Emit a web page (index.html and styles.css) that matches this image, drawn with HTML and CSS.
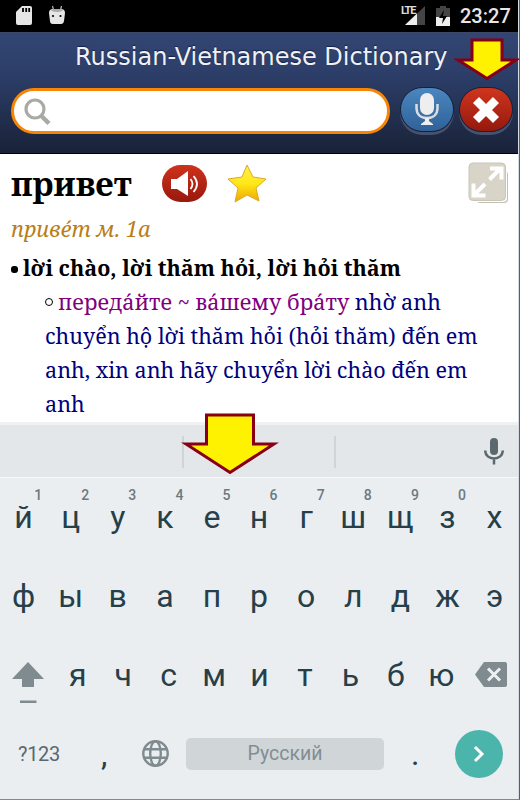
FILE: index.html
```
<!DOCTYPE html>
<html lang="ru">
<head>
  <meta charset="UTF-8" />
  <meta name="viewport" content="width=device-width, initial-scale=1.0"/>
  <title>Russian-Vietnamese Dictionary</title>
  <link rel="stylesheet" href="styles.css">
</head>
<body>
  <div class="screen">
    <div class="status">
      <svg class="sd" width="16" height="20" viewBox="0 0 16 20"><path d="M6 0h8q2 0 2 2v15q0 2-2 2H2q-2 0-2-2V6z" fill="#e6e6e6"/><path d="M7 2v4M10.200 2v4M13.200 2v4" stroke="#000" stroke-width="1.800"/></svg>
      <svg class="droid" width="16" height="20" viewBox="0 0 16 20"><path d="M3.500 1l1 4M12.500 1l-1 4" stroke="#bbb" stroke-width="1.200"/><path d="M0 8q0-4 4-4h8q4 0 4 4l-1 8q-.5 3-3 3H4q-3 0-3-3z" fill="#e6e6e6"/><path d="M2 5.500q6 3 12 0l-2-1.500H4z" fill="#aaa"/><circle cx="4" cy="11" r="1.100"/><circle cx="11.500" cy="11" r="1.100"/></svg>
      <div class="signal">
        <span class="lte">LTE</span>
        <svg width="20" height="19" viewBox="0 0 20 19"><path d="M20 0v19H0z" fill="#444"/><path d="M12 7.600V19H0z" fill="#eee"/></svg>
      </div>
      <svg class="battery" width="14" height="20" viewBox="0 0 14 20"><path d="M4 0h6v2h4v9H0V2h4z" fill="#444"/><path d="M0 11h14v9H0z" fill="#eee"/><path d="M8 4l-5 8h4l-1 6 5-8H7z" fill="#000"/></svg>
      <span class="time">23:27</span>
    </div>

    <div class="header">
      <h1>Russian-Vietnamese Dictionary</h1>
      <div class="search-row">
        <div class="search">
          <svg width="27" height="28" viewBox="0 0 27 28"><circle cx="11" cy="11" r="9" fill="none" stroke="#aaa9a3" stroke-width="3.200"/><path d="M17.500 18l7.500 7.500" stroke="#aaa9a3" stroke-width="4.500"/></svg>
        </div>
        <div class="round blue">
          <svg width="24" height="33" viewBox="0 0 24 33"><rect x="5" y="0" width="14" height="22" rx="7" fill="#eee"/><path d="M1.500 11v4c0 6 4 10 10.500 10s10.500-4 10.500-10v-4" fill="none" stroke="#ddd" stroke-width="2.500"/><path d="M10 25h4v3l4 3v1H6v-1l4-3z" fill="#eee"/></svg>
        </div>
        <div class="round red">
          <svg width="28" height="28" viewBox="0 0 28 28"><path d="M4 4l20 20M24 4L4 24" stroke="#fff" stroke-width="8.500"/></svg>
        </div>
      </div>
      <svg class="arrow-top" width="66" height="44" viewBox="0 0 66 44"><path d="M18 2h30v20h14L33 40.500 4 22h14z" fill="#fff200" stroke="#880015" stroke-width="3" stroke-miterlimit="10"/></svg>
    </div>

    <div class="article">
      <div class="word-row">
        <h2>привет</h2>
        <div class="speak">
          <svg width="28" height="26" viewBox="0 0 28 26"><path d="M0 8h6l11-8v25L6 18H0z" fill="#fff"/><path d="M19.500 8q4 5 0 10M22.500 5q7 8 0 16" fill="none" stroke="#fff" stroke-width="1.800"/></svg>
        </div>
        <svg class="star" width="40" height="40" viewBox="0 0 40 40">
          <defs><linearGradient id="gold" x1="0" y1="0" x2="0" y2="1"><stop offset="0" stop-color="#fff04a"/><stop offset=".5" stop-color="#ffe818"/><stop offset="1" stop-color="#efa500"/></linearGradient></defs>
          <path d="M20 1l6 12 13 2-10 9 3 13-12-6-12 7 3-14L1 15l14-2z" fill="url(#gold)" stroke="#dda82a" stroke-linejoin="round"/>
        </svg>
        <svg class="expand" width="41" height="42" viewBox="0 0 41 42"><rect x="8" y="9" width="32" height="32" rx="4" fill="#c2bfb4"/><rect x="6" y="8" width="33" height="32" rx="4" fill="#fff"/><rect x="1" y="1" width="36.500" height="37.500" rx="4" fill="#d8d4c7" stroke="#c9c5b8"/><path d="M21.500 17.500L32.500 6.500M22 6.500h11.500v11M17 22L6 33M5.500 21.500v12h12" fill="none" stroke="#fff" stroke-width="4"/></svg>
      </div>
      <div class="gram"><span>приве́т м. 1a</span></div>
      <div class="meaning"><i class="dot"></i><span>lời chào, lời thăm hỏi, lời hỏi thăm</span></div>
      <div class="example">
        <div><i class="ring"></i><span><b>переда́йте ~ ва́шему бра́ту</b> nhờ anh</span></div>
        <div><span>chuyển hộ lời thăm hỏi (hỏi thăm) đến em</span></div>
        <div><span>anh, xin anh hãy chuyển lời chào đến em</span></div>
        <div><span>anh</span></div>
      </div>
    </div>

    <div class="suggest">
      <i></i><i></i>
      <svg class="mic" width="20" height="27" viewBox="0 0 20 27"><rect x="6" y="0" width="8" height="17" rx="4" fill="#5b696f"/><path d="M1.200 12.500c0 5 4 8 8.800 8s8.800-3 8.800-8M10 20v6.500" fill="none" stroke="#5b696f" stroke-width="2.500"/></svg>
      <svg class="arrow-mid" width="98" height="64" viewBox="0 0 98 64"><path d="M25.500 3h47v29H93L49 60.500 5 32h20.500z" fill="#fff200" stroke="#880015" stroke-width="3" stroke-miterlimit="10"/></svg>
    </div>

    <div class="keyboard">
      <div class="keys">
        <span>й<sup>1</sup></span><span>ц<sup>2</sup></span><span>у<sup>3</sup></span><span>к<sup>4</sup></span><span>е<sup>5</sup></span><span>н<sup>6</sup></span><span>г<sup>7</sup></span><span>ш<sup>8</sup></span><span>щ<sup>9</sup></span><span>з<sup>0</sup></span><span>х</span>
      </div>
      <div class="keys">
        <span>ф</span><span>ы</span><span>в</span><span>а</span><span>п</span><span>р</span><span>о</span><span>л</span><span>д</span><span>ж</span><span>э</span>
      </div>
      <div class="keys">
        <svg class="shift" width="32" height="42" viewBox="0 0 32 42"><path d="M16 0l16 17h-10v8H10v-8H0zM8 38.500h16.500v2.500H8z" fill="#7f8b8e"/></svg>
        <span>я</span><span>ч</span><span>с</span><span>м</span><span>и</span><span>т</span><span>ь</span><span>б</span><span>ю</span>
        <svg class="back" width="32" height="25" viewBox="0 0 32 25"><path d="M9 0h21q2 0 2 2v21q0 2-2 2H9l-9-12.500z" fill="#7f8b8e"/><path d="M13 6.500l12 12M25 6.500l-12 12" stroke="#edf0f2" stroke-width="3"/></svg>
      </div>
      <div class="bottom">
        <span class="num">?123</span>
        <span class="comma">,</span>
        <svg width="27" height="27" viewBox="0 0 27 27" fill="none" stroke="#7f8b8e" stroke-width="2.400"><circle cx="13.500" cy="13.500" r="12.200"/><ellipse cx="13.500" cy="13.500" rx="5.300" ry="12.200"/><path d="M2 9.300h23M2 17.700h23"/></svg>
        <span class="space">Русский</span>
        <span class="period">.</span>
        <div class="enter">
          <svg width="12" height="18" viewBox="0 0 12 18"><path d="M2 2l7 7-7 7" fill="none" stroke="#fff" stroke-width="3"/></svg>
        </div>
      </div>
    </div>
  </div>
</body>
</html>
```
FILE: styles.css
```
* {
  box-sizing: border-box;
}
body {
  margin: 0;
  background: #fff;
  font-family: Roboto, sans-serif;
}
h1, h2 {
  margin: 0;
}
svg {
  display: block;
  flex: none;
}
i {
  flex: none;
}
.screen {
  width: 520px;
  height: 800px;
  padding-right: 1px;
  background: #d5dbe2;
  border-right: 1px solid #0f72c4;
  border-bottom: 1px solid #858890;
  overflow: hidden;
}
.status {
  height: 32px;
  background: #000;
  display: flex;
  padding-top: 6px;
}
.sd {
  margin-left: 16px;
}
.droid {
  margin-left: 17px;
  margin-top: -1px;
}
.signal {
  position: relative;
  margin-left: auto;
  margin-right: 11px;
}
.lte {
  position: absolute;
  left: -4px;
  top: -1px;
  font-size: 11px;
  line-height: 11px;
  font-weight: bold;
  letter-spacing: -1.200px;
  color: #ddd;
}
.battery {
  margin-right: 10px;
}
.time {
  color: #e6e6e6;
  font-size: 20px;
  font-weight: 500;
  line-height: 21px;
  width: 48px;
  margin-right: 10px;
  white-space: nowrap;
}
.header {
  position: relative;
  height: 122px;
  padding: 11px 4px 0 11px;
  background: linear-gradient(#334673, #2c3e68 35%, #192238);
  border-top: 1px solid #3c4866;
  border-bottom: 1px solid #000;
}
h1 {
  margin-left: 64px;
  font-family: "DejaVu Sans", sans-serif;
  font-size: 24px;
  font-weight: normal;
  line-height: 26px;
  color: #f0f1f5;
  white-space: nowrap;
  text-shadow: 0 -1px 1px #15224a;
}
.search-row {
  display: flex;
  margin-top: 17px;
}
.search {
  width: 379px;
  height: 46px;
  margin-top: 1px;
  border: 3px solid #f98507;
  border-radius: 23px;
  background: #fff;
  padding: 7px 0 0 10px;
}
.round {
  width: 54px;
  height: 45px;
  border-radius: 23px;
  border: 1px solid #172039;
  box-shadow: 0 3px 0 #47516b;
  display: flex;
  align-items: center;
  justify-content: center;
}
.blue {
  margin-left: 10px;
  background: linear-gradient(#4b86bf, #2f6299);
}
.red {
  margin-left: 5px;
  background: linear-gradient(#d0351d, #94190e);
}
.arrow-top {
  position: absolute;
  left: 454px;
  top: 5px;
}
.article {
  height: 268px;
  background: #fff;
  padding: 0 11px;
  font-family: "Noto Serif", "DejaVu Serif Condensed", "DejaVu Serif", serif;
  white-space: nowrap;
}
.word-row {
  display: flex;
  height: 57px;
}
h2 {
  width: 151px;
  font-size: 32.500px;
  line-height: 60px;
}
.speak {
  width: 45px;
  height: 37px;
  margin-top: 11px;
  border-radius: 19px;
  background: linear-gradient(#ce321c, #98190e);
  display: flex;
  align-items: center;
  justify-content: center;
}
.star {
  margin: 10px 0 0 20px;
}
.expand {
  margin: 8px -2px 0 auto;
}
.gram {
  height: 39px;
  font-size: 21.700px;
  line-height: 35px;
  font-style: italic;
  color: #b87e18;
}
.meaning {
  display: flex;
  align-items: center;
  height: 35px;
  font-size: 21.500px;
  font-weight: bold;
}
.dot {
  width: 7px;
  height: 7px;
  border-radius: 3px;
  background: #000;
  margin: 4px 5px 0 0;
}
.example {
  margin-left: 34px;
  color: #00007d;
  font-size: 21.550px;
}
.example div {
  display: flex;
  align-items: center;
  height: 33.800px;
}
.example b {
  font-weight: normal;
  color: #800080;
}
.ring {
  width: 8px;
  height: 8px;
  border: 1.500px solid #000;
  border-radius: 50%;
  margin-right: 5px;
}
.suggest {
  position: relative;
  height: 56px;
  background: #e3e7ea;
  border-top: 3px solid #f0f1f3;
  border-bottom: 1px solid #f7f8f8;
  display: flex;
}
.suggest i {
  width: 2px;
  height: 32px;
  margin: 11px 0 0 182px;
  background: #d0d4d7;
}
.suggest i + i {
  margin-left: 150px;
}
.mic {
  margin: 13px 14px 0 auto;
}
.arrow-mid {
  position: absolute;
  left: 181px;
  top: -13px;
}
.keyboard {
  height: 321px;
  background: #ebeef1;
  color: #263f49;
}
.keys {
  display: flex;
  height: 79px;
  font-size: 32px;
  line-height: 79px;
}
.keys span {
  flex: 1;
  text-align: center;
  position: relative;
}
.keys sup {
  position: absolute;
  right: 5px;
  top: 8px;
  font-size: 14px;
  font-weight: 500;
  line-height: 18px;
  color: #6d797d;
}
.shift {
  margin: 26px 11px 0 12px;
}
.back {
  margin: 26px 11px 0 11px;
}
.bottom {
  display: flex;
  align-items: center;
  height: 77px;
}
.num {
  width: 42px;
  margin-left: 18px;
  font-size: 20px;
  white-space: nowrap;
  letter-spacing: -0.300px;
  color: #59686e;
}
.comma {
  width: 20px;
  margin: 0 21px 0 41px;
  font-size: 32px;
}
.space {
  width: 198px;
  height: 32px;
  margin-left: 17px;
  border-radius: 5px;
  background: #d0d5d8;
  color: #828d93;
  font-size: 19.500px;
  line-height: 31px;
  text-align: center;
}
.period {
  width: 12px;
  margin-left: 27px;
  font-size: 32px;
}
.enter {
  width: 48px;
  height: 48px;
  margin-left: 32px;
  border-radius: 50%;
  background: #4bb5ab;
  display: flex;
  align-items: center;
  justify-content: center;
}
```
